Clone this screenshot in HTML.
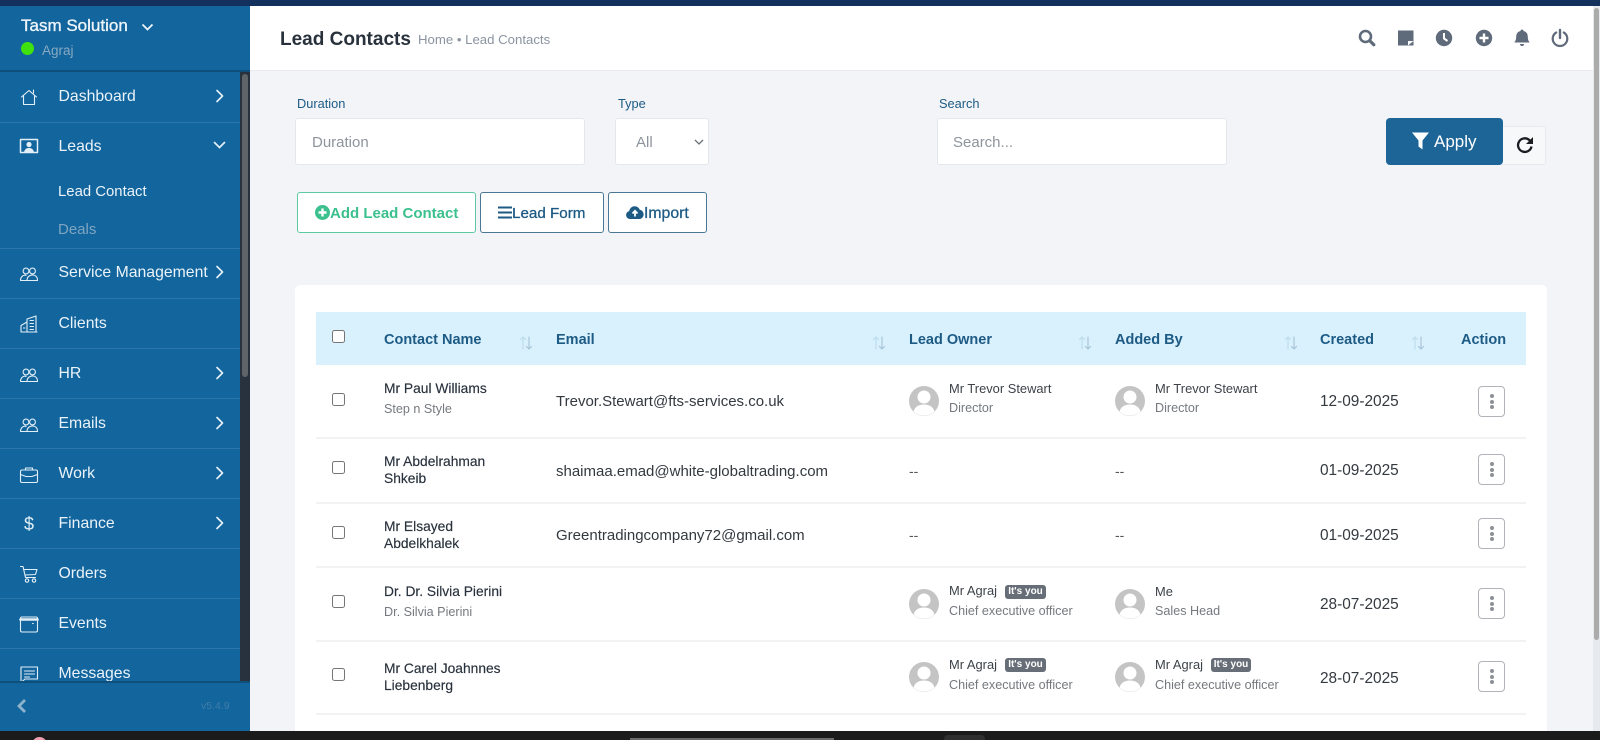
<!DOCTYPE html>
<html lang="en"><head><meta charset="utf-8"><title>Lead Contacts</title>
<style>
*{box-sizing:border-box}
html,body{margin:0;padding:0;width:1600px;height:740px;overflow:hidden;background:#f2f4f8;font-family:"Liberation Sans",sans-serif;color:#28313c}
#w{position:relative;width:1600px;height:740px;overflow:hidden}
.a{position:absolute}
.t{position:absolute;white-space:nowrap;line-height:20px;height:20px}
.m{font-size:15.8px;color:#eaf3f9;left:58.5px}
.d{position:absolute;left:0;width:240px;height:1px;background:#2a76aa}
.ic{position:absolute;left:19px;width:20px;height:20px;fill:none;stroke:#e3eff7;stroke-width:1.1;stroke-linecap:round;stroke-linejoin:round}
.ch{position:absolute;left:214px;width:11px;height:14px;fill:none;stroke:#e3eff7;stroke-width:1.7;stroke-linecap:round;stroke-linejoin:round}
.lb{font-size:12.8px;color:#1d5b85}
.in{position:absolute;top:118px;height:47px;background:#fff;border:1px solid #e4e7ec;border-radius:3px;color:#8d949c;font-size:15px;line-height:47px;padding-left:16px}
.btn{position:absolute;top:192px;height:41px;background:#fff;border:1px solid #4a7793;border-radius:3px;color:#1d5b85;font-size:15px;line-height:41px;white-space:nowrap;font-weight:700}
.btn svg{position:absolute;top:11px}
.th{font-size:14.5px;font-weight:700;color:#1d5b85;top:330px}
.cb{position:absolute;left:332px;width:13px;height:13px;border:1px solid #767676;border-radius:2.5px;background:#fff}
.n{font-size:13.8px;color:#28313c;left:384px;-webkit-text-stroke:.15px #28313c}
.s{font-size:12.6px;color:#75797e}
.e{font-size:15px;color:#33393f;left:556px}
.dt{font-size:15.4px;color:#33393f;left:1320px}
.hr{position:absolute;left:316px;width:1210px;height:2px;background:#f1f2f4}
.av{position:absolute;width:30px;height:30px}
.o{font-size:12.9px;color:#3d4349}
.bd{position:absolute;height:14px;width:41px;background:#676e78;border-radius:3px;color:#fff;font-size:10px;font-weight:700;line-height:14px;text-align:center}
.ab{position:absolute;left:1478px;width:27px;height:31px;border:1px solid #b0b4b8;border-radius:4px;background:#fff}
.ab i{position:absolute;left:10.5px;width:4px;height:4px;border-radius:50%;background:#8d9196}
.so{position:absolute;width:16px;height:16px;fill:none;stroke-width:1.1;stroke-linecap:round;stroke-linejoin:round}
.hi{position:absolute;top:28px;width:20px;height:20px;fill:#5f6b7a}
</style></head><body><div id="w">

<div class="a" style="left:0;top:0;width:1600px;height:6px;background:#14305c"></div>

<!-- top header -->
<div class="a" style="left:250px;top:6px;width:1343px;height:65px;background:#fff;border-bottom:1px solid #e8eaee"></div>
<div class="t" style="left:280px;top:30px;font-size:19px;font-weight:700;color:#28313c">Lead Contacts</div>
<div class="t" style="left:418px;top:30px;font-size:13.2px;color:#8a94a0">Home • Lead Contacts</div>

<svg class="hi" style="left:1357px" viewBox="0 0 20 20"><circle cx="8.500" cy="8.500" r="5.500" fill="none" stroke="#5f6b7a" stroke-width="2.600"/><path d="M12.800 12.800l4 4" stroke="#5f6b7a" stroke-width="3.200" stroke-linecap="round"/></svg>
<svg class="hi" style="left:1395px" viewBox="0 0 20 20"><path d="M3 2.500h15.500v15H3z"/><path d="M13 17.500v-4.500h5.500z" fill="#fff"/></svg>
<svg class="hi" style="left:1434px" viewBox="0 0 20 20"><circle cx="10" cy="10" r="8.200"/><path d="M10 5v5.500l3.500 2.500" fill="none" stroke="#fff" stroke-width="2"/></svg>
<svg class="hi" style="left:1474px" viewBox="0 0 20 20"><circle cx="10" cy="10" r="8.200"/><path d="M10 5.500v9M5.500 10h9" fill="none" stroke="#fff" stroke-width="2.400"/></svg>
<svg class="hi" style="left:1512px" viewBox="0 0 20 20"><path d="M10 1.500c.9 0 1.500.7 1.500 1.500 3 .7 4.300 3 4.300 5.800 0 3 .8 4.500 2 5.700H2.200c1.200-1.200 2-2.700 2-5.700C4.200 6 5.500 3.700 8.500 3c0-.8.6-1.500 1.500-1.500zM8 16h4a2 2 0 0 1-4 0z"/></svg>
<svg class="hi" style="left:1550px" viewBox="0 0 20 20"><path d="M6.200 4.500a7.300 7.300 0 1 0 7.600 0" fill="none" stroke="#5f6b7a" stroke-width="2.200" stroke-linecap="round"/><path d="M10 2v8" stroke="#5f6b7a" stroke-width="2.400" stroke-linecap="round"/></svg>

<!-- filters -->
<div class="t lb" style="left:297px;top:94px">Duration</div>
<div class="t lb" style="left:618px;top:94px">Type</div>
<div class="t lb" style="left:939px;top:94px">Search</div>
<div class="in" style="left:295px;width:290px">Duration</div>
<div class="in" style="left:615px;width:94px;padding-left:20px">All<svg class="a" style="left:78px;top:19px;width:10px;height:8px" viewBox="0 0 10 8"><path d="M1 2l4 4 4-4" fill="none" stroke="#6a7078" stroke-width="1.300"/></svg></div>
<div class="in" style="left:937px;width:290px;padding-left:15px">Search...</div>

<div class="a" style="left:1500px;top:126px;width:46px;height:39px;background:#f7f8fa;border:1px solid #e8eaee;border-radius:3px"></div>
<svg class="a" style="left:1515px;top:135px;width:20px;height:20px" viewBox="0 0 20 20"><path d="M16.500 11.500A6.800 6.800 0 1 1 14.300 5L16.500 7" fill="none" stroke="#1a1d21" stroke-width="2.300"/><path d="M18 2v7h-7z" fill="#1a1d21"/></svg>
<div class="a" style="left:1386px;top:118px;width:117px;height:47px;background:#1d6497;border-radius:4px"></div>
<svg class="a" style="left:1412px;top:132px;width:17px;height:18px" viewBox="0 0 17 18"><path d="M0 .5h17L10.500 8.500V17.500L6.500 14.500V8.500z" fill="#fff"/></svg>
<div class="t" style="left:1434px;top:132px;font-size:17px;color:#fff">Apply</div>

<div class="btn" style="left:297px;width:179px;border-color:#5cc9a0;color:#3cc08e;padding-left:32px">Add Lead Contact
<svg style="left:17px;top:12px;width:15px;height:15px" viewBox="0 0 15 15"><circle cx="7.500" cy="7.500" r="7.500" fill="#3cc08e"/><path d="M7.500 3.500v8M3.500 7.500h8" stroke="#fff" stroke-width="2.400"/></svg></div>
<div class="btn" style="left:480px;width:124px;padding-left:31px;font-size:15.2px;font-weight:400;-webkit-text-stroke:.3px #1d5b85">Lead Form
<svg style="left:17px;top:13px;width:14px;height:13px" viewBox="0 0 14 13"><path d="M0 1.500h14M0 6.500h14M0 11.500h14" stroke="#1d5b85" stroke-width="2"/></svg></div>
<div class="btn" style="left:608px;width:99px;padding-left:35px;font-size:15.8px;font-weight:400;-webkit-text-stroke:.3px #1d5b85">Import
<svg style="left:17px;top:12px;width:18px;height:15px" viewBox="0 0 18 15"><path d="M4 14a4 4 0 0 1-.8-7.900A5.500 5.500 0 0 1 13.800 4.800 4.700 4.700 0 0 1 14 14z" fill="#1d5b85"/><path d="M9 11.500V6.500M6.500 8.500L9 5.800l2.500 2.700" fill="none" stroke="#fff" stroke-width="1.800"/></svg></div>

<!-- card -->
<div class="a" style="left:295px;top:285px;width:1252px;height:446px;background:#fff;border-radius:5px 5px 0 0"></div>
<div class="a" style="left:316px;top:312px;width:1210px;height:53px;background:#d9f0fd"></div>
<div class="cb" style="top:330px"></div>
<div class="t th" style="left:384px">Contact Name</div>
<div class="t th" style="left:556px">Email</div>
<div class="t th" style="left:909px">Lead Owner</div>
<div class="t th" style="left:1115px">Added By</div>
<div class="t th" style="left:1320px">Created</div>
<div class="t th" style="left:1461px">Action</div>

<svg class="so" style="left:518px;top:335px" viewBox="0 0 16 16"><path d="M5 14V2M2.500 4.500L5 2l2.500 2.500" stroke="#bcdcec"/><path d="M11 2v12M8.500 11.500L11 14l2.500-2.500" stroke="#a4c4d6"/></svg>
<svg class="so" style="left:871px;top:335px" viewBox="0 0 16 16"><path d="M5 14V2M2.500 4.500L5 2l2.500 2.500" stroke="#bcdcec"/><path d="M11 2v12M8.500 11.500L11 14l2.500-2.500" stroke="#a4c4d6"/></svg>
<svg class="so" style="left:1077px;top:335px" viewBox="0 0 16 16"><path d="M5 14V2M2.500 4.500L5 2l2.500 2.500" stroke="#bcdcec"/><path d="M11 2v12M8.500 11.500L11 14l2.500-2.500" stroke="#a4c4d6"/></svg>
<svg class="so" style="left:1283px;top:335px" viewBox="0 0 16 16"><path d="M5 14V2M2.500 4.500L5 2l2.500 2.500" stroke="#bcdcec"/><path d="M11 2v12M8.500 11.500L11 14l2.500-2.500" stroke="#a4c4d6"/></svg>
<svg class="so" style="left:1410px;top:335px" viewBox="0 0 16 16"><path d="M5 14V2M2.500 4.500L5 2l2.500 2.500" stroke="#bcdcec"/><path d="M11 2v12M8.500 11.500L11 14l2.500-2.500" stroke="#a4c4d6"/></svg>

<!-- dividers -->
<div class="hr" style="top:437px"></div>
<div class="hr" style="top:502px"></div>
<div class="hr" style="top:566px"></div>
<div class="hr" style="top:640px"></div>
<div class="hr" style="top:713px"></div>

<!-- checkboxes -->
<div class="cb" style="top:393px"></div>
<div class="cb" style="top:461px"></div>
<div class="cb" style="top:526px"></div>
<div class="cb" style="top:595px"></div>
<div class="cb" style="top:668px"></div>

<!-- names -->
<div class="t n" style="top:379px">Mr Paul Williams</div>
<div class="t s" style="left:384px;top:399px">Step n Style</div>
<div class="t n" style="top:452px">Mr Abdelrahman</div>
<div class="t n" style="top:469px">Shkeib</div>
<div class="t n" style="top:517px">Mr Elsayed</div>
<div class="t n" style="top:534px">Abdelkhalek</div>
<div class="t n" style="top:582px">Dr. Dr. Silvia Pierini</div>
<div class="t s" style="left:384px;top:602px">Dr. Silvia Pierini</div>
<div class="t n" style="top:659px">Mr Carel Joahnnes</div>
<div class="t n" style="top:676px">Liebenberg</div>

<!-- emails -->
<div class="t e" style="top:392px">Trevor.Stewart@fts-services.co.uk</div>
<div class="t e" style="top:462px">shaimaa.emad@white-globaltrading.com</div>
<div class="t e" style="top:526px">Greentradingcompany72@gmail.com</div>

<!-- owners -->
<svg width="0" height="0" style="position:absolute"><defs><symbol id="av" viewBox="0 0 30 30"><circle cx="15" cy="15" r="15" fill="#c4c4c4"/><circle cx="15" cy="11" r="6.500" fill="#fff"/><path d="M4.500 25.500c1.500-5 5.500-7 10.500-7s9 2 10.500 7a15 15 0 0 1-21 0z" fill="#fff"/></symbol></defs></svg>

<svg class="av" style="left:909px;top:386px"><use href="#av"/></svg>
<div class="t o" style="left:949px;top:379px">Mr Trevor Stewart</div>
<div class="t s" style="left:949px;top:398px">Director</div>
<svg class="av" style="left:1115px;top:386px"><use href="#av"/></svg>
<div class="t o" style="left:1155px;top:379px">Mr Trevor Stewart</div>
<div class="t s" style="left:1155px;top:398px">Director</div>

<div class="t" style="left:909px;top:461px;font-size:14px;color:#555">--</div>
<div class="t" style="left:1115px;top:461px;font-size:14px;color:#555">--</div>
<div class="t" style="left:909px;top:525px;font-size:14px;color:#555">--</div>
<div class="t" style="left:1115px;top:525px;font-size:14px;color:#555">--</div>

<svg class="av" style="left:909px;top:589px"><use href="#av"/></svg>
<div class="t o" style="left:949px;top:581px">Mr Agraj</div>
<div class="bd" style="left:1005px;top:585px">It's you</div>
<div class="t s" style="left:949px;top:601px">Chief executive officer</div>
<svg class="av" style="left:1115px;top:589px"><use href="#av"/></svg>
<div class="t o" style="left:1155px;top:582px">Me</div>
<div class="t s" style="left:1155px;top:601px">Sales Head</div>

<svg class="av" style="left:909px;top:662px"><use href="#av"/></svg>
<div class="t o" style="left:949px;top:655px">Mr Agraj</div>
<div class="bd" style="left:1005px;top:658px">It's you</div>
<div class="t s" style="left:949px;top:675px">Chief executive officer</div>
<svg class="av" style="left:1115px;top:662px"><use href="#av"/></svg>
<div class="t o" style="left:1155px;top:655px">Mr Agraj</div>
<div class="bd" style="left:1211px;top:658px;width:40px">It's you</div>
<div class="t s" style="left:1155px;top:675px">Chief executive officer</div>

<!-- dates -->
<div class="t dt" style="top:392px">12-09-2025</div>
<div class="t dt" style="top:461px">01-09-2025</div>
<div class="t dt" style="top:526px">01-09-2025</div>
<div class="t dt" style="top:595px">28-07-2025</div>
<div class="t dt" style="top:669px">28-07-2025</div>

<!-- actions -->
<div class="ab" style="top:386px"><i style="top:7px"></i><i style="top:13px"></i><i style="top:18px"></i></div>
<div class="ab" style="top:454px"><i style="top:7px"></i><i style="top:13px"></i><i style="top:18px"></i></div>
<div class="ab" style="top:518px"><i style="top:7px"></i><i style="top:13px"></i><i style="top:18px"></i></div>
<div class="ab" style="top:588px"><i style="top:7px"></i><i style="top:13px"></i><i style="top:18px"></i></div>
<div class="ab" style="top:661px"><i style="top:7px"></i><i style="top:13px"></i><i style="top:18px"></i></div>

<!-- page scrollbar -->
<div class="a" style="left:1593px;top:6px;width:7px;height:725px;background:#e6e9ed"></div>
<div class="a" style="left:1594px;top:8px;width:5px;height:632px;background:#ababab;border-radius:3px"></div>

<!-- sidebar -->
<div class="a" style="left:0;top:6px;width:250px;height:725px;background:#13659d"></div>
<div class="a" style="left:0;top:70px;width:250px;height:2px;background:#0f4f7c"></div>
<div class="t" style="left:21px;top:16px;font-size:17px;color:#eef5fa;-webkit-text-stroke:.35px #eef5fa">Tasm Solution</div>
<svg class="a" style="left:141px;top:23px;width:13px;height:9px" viewBox="0 0 13 9"><path d="M1.500 1.500L6.500 6.500 11.500 1.500" fill="none" stroke="#eef5fa" stroke-width="1.800"/></svg>
<div class="a" style="left:21px;top:42px;width:13px;height:13px;border-radius:50%;background:#3fe20f"></div>
<div class="t" style="left:42px;top:41px;font-size:13.500px;color:#87a9c2">Agraj</div>

<!-- scroll track -->
<div class="a" style="left:240px;top:72px;width:10px;height:609px;background:#28323e"></div>
<div class="a" style="left:242px;top:74px;width:6px;height:303px;background:#5f6469;border-radius:3px"></div>

<div class="d" style="top:122px"></div>
<div class="d" style="top:248px"></div>
<div class="d" style="top:298px"></div>
<div class="d" style="top:348px"></div>
<div class="d" style="top:398px"></div>
<div class="d" style="top:448px"></div>
<div class="d" style="top:498px"></div>
<div class="d" style="top:548px"></div>
<div class="d" style="top:598px"></div>
<div class="d" style="top:648px"></div>

<div class="t m" style="top:87px">Dashboard</div>
<div class="t m" style="top:137px">Leads</div>
<div class="t" style="left:58px;top:182px;font-size:14.900px;color:#eaf3f9">Lead Contact</div>
<div class="t" style="left:58px;top:220px;font-size:15px;color:#7fa5c1">Deals</div>
<div class="t m" style="top:263px">Service Management</div>
<div class="t m" style="top:314px">Clients</div>
<div class="t m" style="top:364px">HR</div>
<div class="t m" style="top:414px">Emails</div>
<div class="t m" style="top:464px">Work</div>
<div class="t m" style="top:514px">Finance</div>
<div class="t m" style="top:564px">Orders</div>
<div class="t m" style="top:614px">Events</div>
<div class="t m" style="top:664px">Messages</div>

<!-- chevrons -->
<svg class="ch" style="top:89px" viewBox="0 0 11 14"><path d="M3 1.500L8.500 7 3 12.500"/></svg>
<svg class="ch" style="top:265px" viewBox="0 0 11 14"><path d="M3 1.500L8.500 7 3 12.500"/></svg>
<svg class="ch" style="top:366px" viewBox="0 0 11 14"><path d="M3 1.500L8.500 7 3 12.500"/></svg>
<svg class="ch" style="top:416px" viewBox="0 0 11 14"><path d="M3 1.500L8.500 7 3 12.500"/></svg>
<svg class="ch" style="top:466px" viewBox="0 0 11 14"><path d="M3 1.500L8.500 7 3 12.500"/></svg>
<svg class="ch" style="top:516px" viewBox="0 0 11 14"><path d="M3 1.500L8.500 7 3 12.500"/></svg>
<svg class="a" style="left:213px;top:141px;width:13px;height:9px" viewBox="0 0 13 9"><path d="M1.500 1.500L6.500 6.500 11.500 1.500" fill="none" stroke="#e3eff7" stroke-width="1.700" stroke-linecap="round"/></svg>

<!-- icons -->
<svg class="ic" style="top:87px" viewBox="0 0 20 20"><path d="M2.500 10L10 3.500 17.500 10M4.500 8.500V17.500h11V8.500M14.500 3v3"/></svg>
<svg class="ic" style="top:136px" viewBox="0 0 20 20"><rect x="1.500" y="3.500" width="17" height="13" stroke-width="1.500"/><circle cx="10" cy="8.500" r="2.600" fill="#e3eff7" stroke="none"/><path d="M5 16.500c.5-3.300 2.500-4.500 5-4.500s4.500 1.200 5 4.500z" fill="#e3eff7" stroke="none"/></svg>
<svg class="ic" style="top:264px" viewBox="0 0 20 20"><circle cx="7" cy="7" r="2.900"/><circle cx="13.500" cy="7" r="2.900"/><path d="M1.500 16.500c0-3.500 2-5 4.500-5.500l1 .5M8 16.500c0-3.500 2.500-5.500 5.500-5.500s5 2 5 5.500zM1.500 16.500H8"/></svg>
<svg class="ic" style="top:314px" viewBox="0 0 20 20"><path d="M2 18V11.500L8 8V18M8 18V5L17 2V18ZM2 18h16M11 6.500h3.500M11 9.500h3.500M11 12.500h3.500M11 15.500h3.500M4.500 14h1.500"/></svg>
<svg class="ic" style="top:365px" viewBox="0 0 20 20"><circle cx="7" cy="7" r="2.900"/><circle cx="13.500" cy="7" r="2.900"/><path d="M1.500 16.500c0-3.500 2-5 4.500-5.500l1 .5M8 16.500c0-3.500 2.500-5.500 5.500-5.500s5 2 5 5.500zM1.500 16.500H8"/></svg>
<svg class="ic" style="top:415px" viewBox="0 0 20 20"><circle cx="7" cy="7" r="2.900"/><circle cx="13.500" cy="7" r="2.900"/><path d="M1.500 16.500c0-3.500 2-5 4.500-5.500l1 .5M8 16.500c0-3.500 2.500-5.500 5.500-5.500s5 2 5 5.500zM1.500 16.500H8"/></svg>
<svg class="ic" style="top:465px" viewBox="0 0 20 20"><rect x="1.500" y="5" width="17" height="12.500" rx="1.500"/><path d="M6.500 5V3h7v2M1.500 9.500L7 11.500h6L18.500 9.500"/></svg>
<div class="t" style="left:24px;top:514px;font-size:18px;color:#e3eff7">$</div>
<svg class="ic" style="top:564px" viewBox="0 0 20 20"><path d="M1.500 2.500H4L6.500 13.500H16.500M4.800 5.500H18L16.500 10.500 6 11"/><circle cx="8" cy="16.500" r="1.700"/><circle cx="15" cy="16.500" r="1.700"/></svg>
<svg class="ic" style="top:614px" viewBox="0 0 20 20"><rect x="1.500" y="3" width="17" height="15" rx="1.500"/><path d="M1.500 5.500h17" stroke-width="2.600"/><path d="M13.500 9.500h.8"/></svg>
<svg class="ic" style="top:664px" viewBox="0 0 20 20"><path d="M2 3h16.500v12H6L2 18.500zM5.500 7h10M5.500 10h10M5.500 13h5"/></svg>

<!-- sidebar footer -->
<div class="a" style="left:0;top:681px;width:250px;height:50px;background:#13659d;border-top:2px solid #0f4f7c"></div>
<svg class="a" style="left:16px;top:698px;width:12px;height:16px" viewBox="0 0 12 16"><path d="M9 2L3 8l6 6" fill="none" stroke="#8fb3cc" stroke-width="2.800"/></svg>
<div class="t" style="left:201px;top:696px;font-size:10.500px;color:#3f7da8">v5.4.9</div>

<!-- bottom taskbar -->
<div class="a" style="left:0;top:731px;width:1600px;height:9px;background:#1b1b1b"></div>
<div class="a" style="left:32px;top:737px;width:15px;height:15px;border-radius:50%;background:#eea0b0"></div>
<div class="a" style="left:630px;top:738px;width:204px;height:2px;background:#6b6b6b"></div>
<div class="a" style="left:944px;top:735px;width:41px;height:5px;background:#2f2f2f;border-radius:4px 4px 0 0"></div>
</div></body></html>
